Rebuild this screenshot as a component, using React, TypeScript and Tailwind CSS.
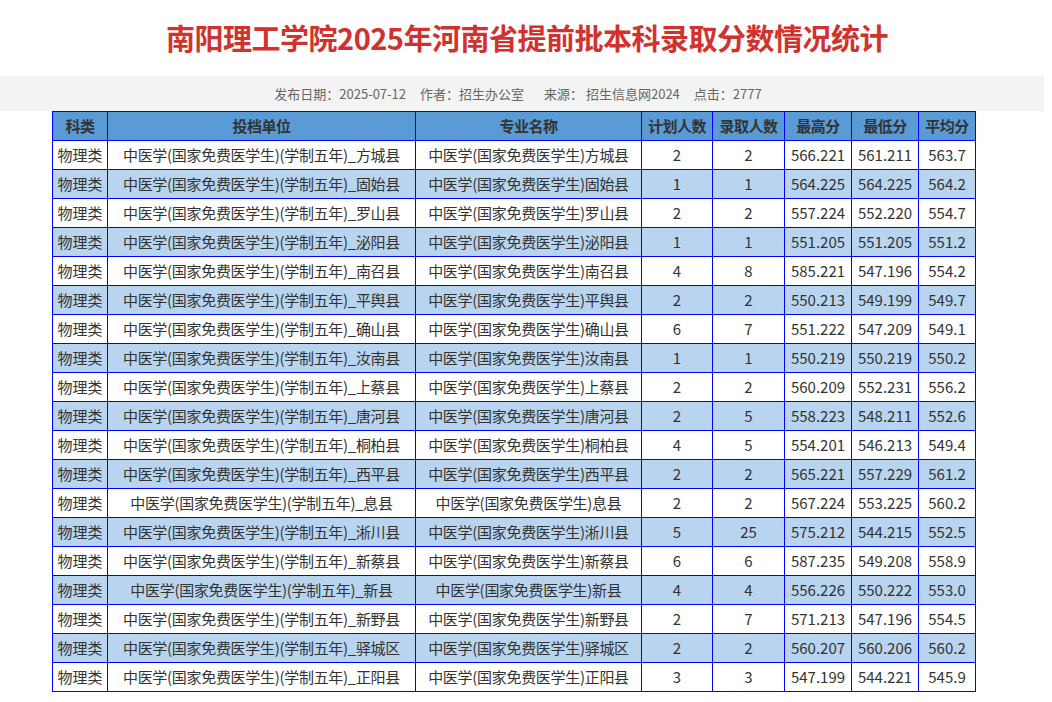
const counties = [
["方城县","方城县","2","2","566.221","561.211","563.7"],
["固始县","固始县","1","1","564.225","564.225","564.2"],
["罗山县","罗山县","2","2","557.224","552.220","554.7"],
["泌阳县","泌阳县","1","1","551.205","551.205","551.2"],
["南召县","南召县","4","8","585.221","547.196","554.2"],
["平舆县","平舆县","2","2","550.213","549.199","549.7"],
["确山县","确山县","6","7","551.222","547.209","549.1"],
["汝南县","汝南县","1","1","550.219","550.219","550.2"],
["上蔡县","上蔡县","2","2","560.209","552.231","556.2"],
["唐河县","唐河县","2","5","558.223","548.211","552.6"],
["桐柏县","桐柏县","4","5","554.201","546.213","549.4"],
["西平县","西平县","2","2","565.221","557.229","561.2"],
["息县","息县","2","2","567.224","553.225","560.2"],
["淅川县","淅川县","5","25","575.212","544.215","552.5"],
["新蔡县","新蔡县","6","6","587.235","549.208","558.9"],
["新县","新县","4","4","556.226","550.222","553.0"],
["新野县","新野县","2","7","571.213","547.196","554.5"],
["驿城区","驿城区","2","2","560.207","560.206","560.2"],
["正阳县","正阳县","3","3","547.199","544.221","545.9"],
];
const widths = ["w-[55px]","w-[308px]","w-[226px]","w-[71px]","w-[72px]","w-[67px]","w-[67px]","w-[57px]"];
const heads = ["科类","投档单位","专业名称","计划人数","录取人数","最高分","最低分","平均分"];
export default function App() {
  return (
    <div className="w-[1052px] h-[702px] bg-white overflow-hidden" style={{fontFamily:'"Microsoft YaHei","Noto Sans CJK SC",sans-serif'}}>
      <h1 className="h-[76px] pl-[2px] flex items-center justify-center text-[29px] font-bold text-[#d2322d] tracking-[-0.5px]">南阳理工学院2025年河南省提前批本科录取分数情况统计</h1>
      <div className="w-[1044px] h-[35px] bg-[#f3f3f3] flex items-center justify-center text-[13px] text-[#666] gap-[14px] pr-[8px]">
        <span>发布日期：2025-07-12</span><span>作者：招生办公室</span><span className="ml-[6px]">来源： 招生信息网2024</span><span>点击：2777</span>
      </div>
      <table className="ml-[52px] border-collapse text-[15px] text-[#333] table-fixed">
        <thead>
          <tr className="h-[29px] bg-[#5b9bd5]">
            {heads.map((h,i)=>(<th key={i} className={`${widths[i]} border border-[#0000ff] font-bold text-[15px] p-0 whitespace-nowrap tracking-[-0.5px]`}>{h}</th>))}
          </tr>
        </thead>
        <tbody>
          {counties.map((r,i)=>(
            <tr key={i} className={`h-[29px] ${i%2===1?"bg-[#b8d4ee]":"bg-white"}`}>
              <td className="border border-[#0000ff] text-center p-0 whitespace-nowrap">物理类</td>
              <td className="border border-[#0000ff] text-center p-0 whitespace-nowrap tracking-[-0.3px]">中医学(国家免费医学生)(学制五年)_{r[0]}</td>
              <td className="border border-[#0000ff] text-center p-0 whitespace-nowrap tracking-[-0.3px]">中医学(国家免费医学生){r[1]}</td>
              {r.slice(2).map((c,j)=>(<td key={j} className="border border-[#0000ff] text-center p-0 whitespace-nowrap">{c}</td>))}
            </tr>
          ))}
        </tbody>
      </table>
    </div>
  );
}
